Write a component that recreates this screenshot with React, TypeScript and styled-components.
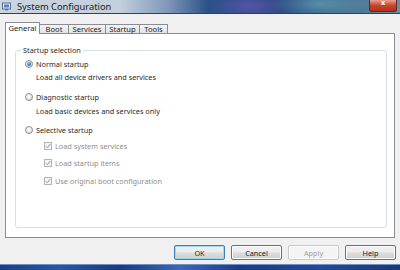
import styled, { createGlobalStyle } from 'styled-components';

const Global = createGlobalStyle`
  html, body {
    margin: 0;
    padding: 0;
    width: 400px;
    height: 270px;
    overflow: hidden;
    background: #f0f0f0;
  }
  * { box-sizing: border-box; }
`;

const Window = styled.div`
  width: 400px;
  height: 270px;
  display: flex;
  flex-direction: column;
  font-family: 'Noto Sans', 'Open Sans', sans-serif;
  font-size: 7.3px;
  color: #2a2a2a;
`;

const TitleBar = styled.div`
  height: 14px;
  display: flex;
  align-items: center;
  padding-left: 2px;
  background:
    radial-gradient(ellipse 40px 14px at 250px 6px, rgba(120, 90, 200, 0.55), transparent),
    radial-gradient(ellipse 50px 14px at 320px 4px, rgba(120, 190, 200, 0.5), transparent),
    linear-gradient(90deg, #cbd5df 0%, #c2cfdc 30%, #7f97b8 42%, #2c5188 52%, #284a80 70%, #3f6a8e 85%, #6b8ea8 100%);
  border-bottom: 1px solid #2a4168;
  position: relative;
`;

const AppIcon = styled.svg`
  width: 9px;
  height: 9px;
  flex: none;
`;

const Title = styled.span`
  margin-left: 6px;
  font-size: 9.3px;
  color: #1c1c1c;
`;

const CloseButton = styled.div`
  position: absolute;
  right: 3px;
  top: 0;
  width: 28px;
  height: 12px;
  border-radius: 0 0 3px 3px;
  background: linear-gradient(#e8a090, #c8442c 50%, #b23218);
  border: 1px solid #5a2a2a;
  border-top: none;
  display: flex;
  justify-content: center;
  align-items: flex-start;
  color: #fff;
  font-family: 'DejaVu Sans', sans-serif;
  font-size: 7px;
  font-weight: bold;
  line-height: 7px;
`;

const Body = styled.div`
  flex: 1;
  background: #f0f0f0;
  padding: 8px 5px 0 5px;
  display: flex;
  flex-direction: column;
`;

const TabStrip = styled.div`
  height: 12px;
  display: flex;
  align-items: flex-end;
  position: relative;
  z-index: 1;
  margin-bottom: -1px;
`;

const Tab = styled.div<{ $active?: boolean; $w: number }>`
  width: ${p => p.$w}px;
  height: ${p => (p.$active ? 12 : 10)}px;
  display: flex;
  align-items: center;
  justify-content: center;
  border: 1px solid #898c95;
  border-bottom: ${p => (p.$active ? 'none' : '1px solid #898c95')};
  margin-left: ${p => (p.$active ? 0 : -1)}px;
  background: ${p => (p.$active ? '#ffffff' : 'linear-gradient(#f3f3f3, #e3e3e3)')};
  color: #1e1e1e;
  font-size: 7.6px;
  line-height: 1;
  padding-top: ${p => (p.$active ? 0 : 1)}px;
`;

const Panel = styled.div`
  height: 205px;
  background: #ffffff;
  border: 1px solid #898c95;
  padding: 10px 7px 9px 9px;
  display: flex;
`;

const Group = styled.fieldset`
  flex: 1;
  margin: 0;
  border: 1px solid #d5dfe5;
  border-radius: 3px;
  padding: 2px 0 0 8px;
  min-width: 0;
`;

const Legend = styled.legend`
  padding: 0 2px;
  margin-left: -3px;
  line-height: 12px;
  color: #2a2a2a;
`;

const Row = styled.div<{ $top: number; $indent?: number; $disabled?: boolean }>`
  height: 12px;
  margin-top: ${p => p.$top}px;
  margin-left: ${p => p.$indent ?? 0}px;
  display: flex;
  align-items: center;
  gap: 3px;
  color: ${p => (p.$disabled ? '#8e8e8e' : '#2a2a2a')};
  white-space: nowrap;
`;

const Radio = styled.span<{ $checked?: boolean }>`
  width: 8px;
  height: 8px;
  margin-left: 1px;
  border-radius: 50%;
  border: 1px solid #8a8f98;
  background: radial-gradient(circle at 40% 35%, #ffffff, #dcdfe4 80%);
  display: flex;
  align-items: center;
  justify-content: center;
  flex: none;
  &::after {
    content: '';
    display: ${p => (p.$checked ? 'block' : 'none')};
    width: 4px;
    height: 4px;
    border-radius: 50%;
    background: radial-gradient(circle at 35% 35%, #8fd0ff, #1a5fa8 70%);
  }
`;

const Check = styled.span`
  width: 8px;
  height: 8px;
  border: 1px solid #b4b4b4;
  background: #f4f4f4;
  flex: none;
  display: flex;
  align-items: center;
  justify-content: center;
`;

const Desc = styled.div<{ $top: number }>`
  height: 12px;
  line-height: 12px;
  margin-top: ${p => p.$top}px;
  margin-left: 12px;
  white-space: nowrap;
`;

const ButtonRow = styled.div`
  display: flex;
  justify-content: flex-end;
  gap: 6px;
  margin-top: 7px;
  margin-right: -1px;
`;

const Button = styled.div<{ $default?: boolean; $disabled?: boolean }>`
  width: 51px;
  height: 15px;
  border-radius: 2px;
  border: 1px solid ${p => (p.$default ? '#3c7fb1' : p.$disabled ? '#c9c9c9' : '#707070')};
  background: ${p => (p.$disabled ? '#f4f4f4' : 'linear-gradient(#f2f2f2 0%, #ebebeb 48%, #dddddd 52%, #cfcfcf 100%)')};
  box-shadow: ${p => (p.$default ? 'inset 0 0 0 1px #9fd8ef' : 'inset 0 0 0 1px #fcfcfc')};
  display: flex;
  align-items: center;
  justify-content: center;
  color: ${p => (p.$disabled ? '#a0a0a0' : '#1e1e1e')};
`;

const Taskbar = styled.div`
  height: 6px;
  margin-top: 4px;
  margin-left: -5px;
  margin-right: -5px;
  background: linear-gradient(90deg, #1d3f86 0%, #2a55a8 15%, #1b3a80 30%, #3b67b8 45%, #1c3d85 60%, #24489a 80%, #1a3778 100%);
  border-top: 1px solid #6d8fc4;
`;

const CheckMark = () => (
  <svg width="6" height="6" viewBox="0 0 6 6">
    <path d="M0.8 3.2 L2.4 4.8 L5.2 1" fill="none" stroke="#9a9a9a" strokeWidth="1" />
  </svg>
);

export default function App() {
  return (
    <>
      <Global />
      <Window>
        <TitleBar>
          <AppIcon viewBox="0 0 9 9">
            <rect x="0.5" y="1" width="8" height="6" fill="#dfe8f4" stroke="#5a6f8c" strokeWidth="1" />
            <rect x="2" y="2.5" width="5" height="3" fill="#4d86c8" />
            <rect x="3" y="7" width="3" height="1.5" fill="#6a7c90" />
          </AppIcon>
          <Title>System Configuration</Title>
          <CloseButton>x</CloseButton>
        </TitleBar>
        <Body>
          <TabStrip>
            <Tab $active $w={35}>General</Tab>
            <Tab $w={30}>Boot</Tab>
            <Tab $w={38}>Services</Tab>
            <Tab $w={35}>Startup</Tab>
            <Tab $w={29}>Tools</Tab>
          </TabStrip>
          <Panel>
            <Group>
              <Legend>Startup selection</Legend>
              <Row $top={0}>
                <Radio $checked />
                Normal startup
              </Row>
              <Desc $top={1}>Load all device drivers and services</Desc>
              <Row $top={8}>
                <Radio />
                Diagnostic startup
              </Row>
              <Desc $top={2}>Load basic devices and services only</Desc>
              <Row $top={7}>
                <Radio />
                Selective startup
              </Row>
              <Row $top={4} $indent={20} $disabled>
                <Check><CheckMark /></Check>
                Load system services
              </Row>
              <Row $top={5} $indent={20} $disabled>
                <Check><CheckMark /></Check>
                Load startup items
              </Row>
              <Row $top={6} $indent={20} $disabled>
                <Check><CheckMark /></Check>
                Use original boot configuration
              </Row>
            </Group>
          </Panel>
          <ButtonRow>
            <Button $default>OK</Button>
            <Button>Cancel</Button>
            <Button $disabled>Apply</Button>
            <Button>Help</Button>
          </ButtonRow>
          <Taskbar />
        </Body>
      </Window>
    </>
  );
}
